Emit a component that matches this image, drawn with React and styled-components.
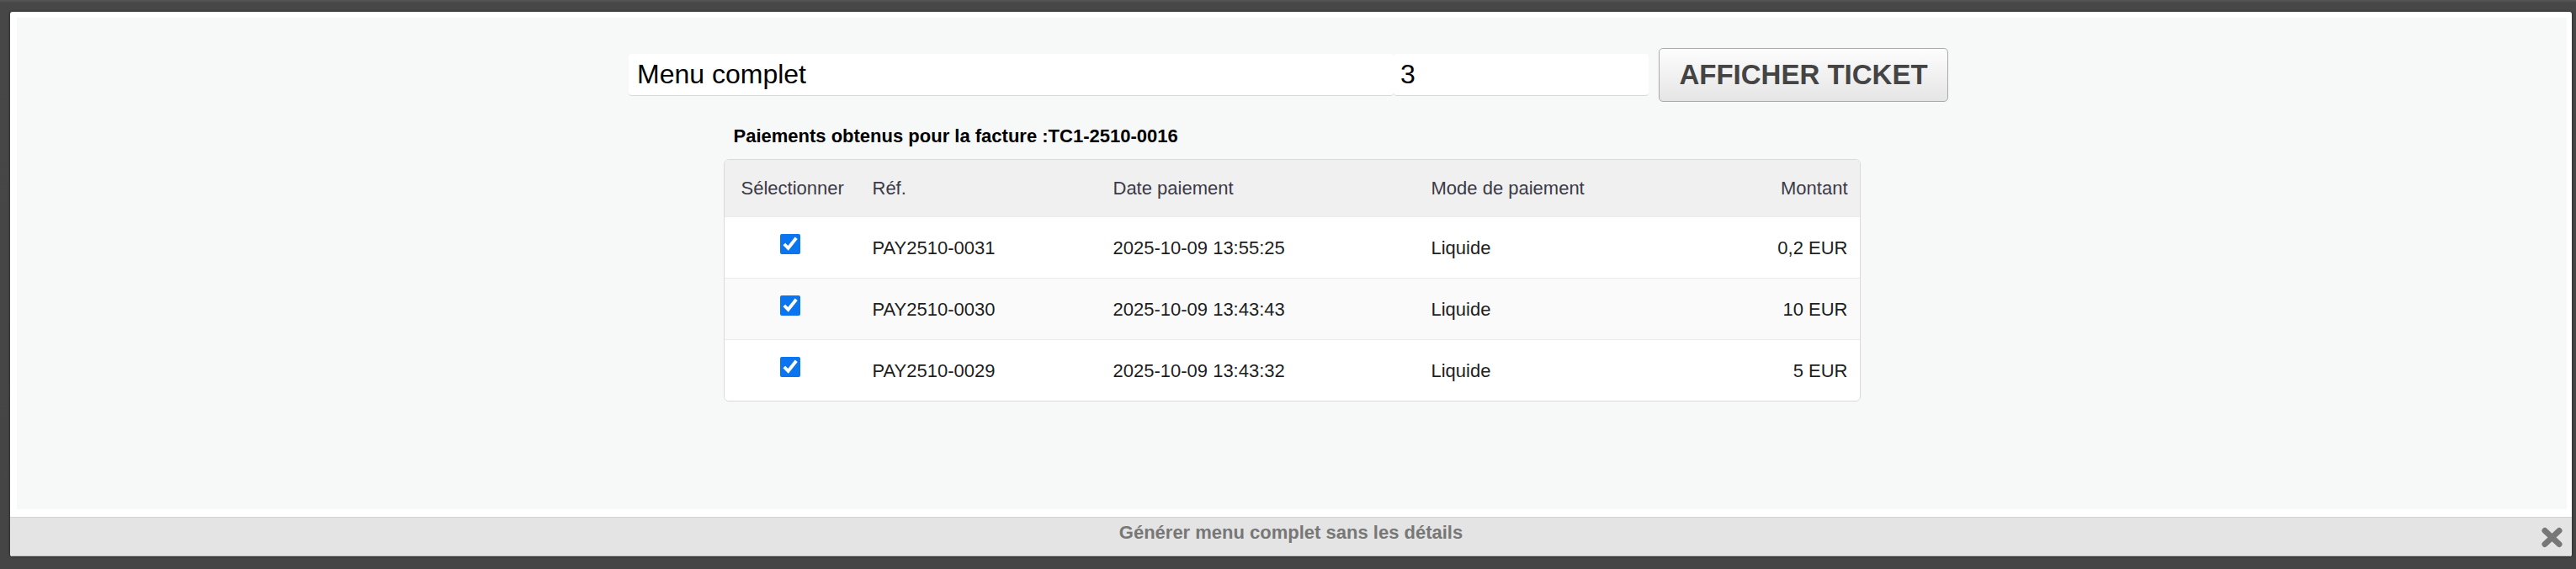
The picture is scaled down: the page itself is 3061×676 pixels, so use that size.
import React from "react";
import styled, { createGlobalStyle } from "styled-components";

const GlobalStyle = createGlobalStyle`
  html, body { margin: 0; padding: 0; }
  body {
    background: #4a4a4a;
    font-family: "Liberation Sans", Arial, sans-serif;
    overflow: hidden;
  }
`;

const Page = styled.div`
  box-sizing: border-box;
  width: 3061px;
  height: 676px;
  padding: 14px 5px 15px 12px;
  background: linear-gradient(#585858 0, #474747 3px, #454545 100%);
  display: flex;
`;

const Dialog = styled.div`
  flex: 1;
  display: flex;
  flex-direction: column;
  background: #ffffff;
  border-radius: 3px;
  box-shadow: 0 0 3px rgba(0, 0, 0, 0.6);
  overflow: hidden;
`;

const Frame = styled.div`
  flex: 1;
  display: flex;
  padding: 7px 6px 9px 8px;
`;

const Content = styled.div`
  flex: 1;
  background: #f6f9f8;
  display: flex;
  flex-direction: column;
  align-items: center;
  padding-top: 36px;
`;

const FormRow = styled.div`
  display: flex;
  align-items: center;
  width: 1569px;
  margin-left: -7px;
`;

const Field = styled.input`
  box-sizing: border-box;
  height: 50px;
  width: ${(p) => p.$w}px;
  border: none;
  border-bottom: 1px solid #d9d9d9;
  border-radius: 4px;
  background: #ffffff;
  padding: 0 0 0 ${(p) => p.$pl}px;
  font-family: "Liberation Sans", Arial, sans-serif;
  font-size: 32px;
  color: #000;
  outline: none;
`;

const TicketButton = styled.button`
  box-sizing: border-box;
  width: 344px;
  height: 64px;
  margin-left: 12px;
  padding: 0;
  border: 1px solid #a9a9a9;
  border-radius: 5px;
  background: linear-gradient(#fdfdfd, #e5e5e5);
  color: #444;
  font-family: "Liberation Sans", Arial, sans-serif;
  font-weight: bold;
  font-size: 33px;
  cursor: pointer;
`;

const Section = styled.div`
  width: 1351px;
  margin-top: 28px;
`;

const Heading = styled.div`
  padding-left: 12px;
  font-family: "Liberation Sans", Arial, sans-serif;
  font-weight: bold;
  font-size: 22px;
  line-height: 25px;
  color: #000;
  margin-bottom: 15px;
`;

const Table = styled.table`
  width: 100%;
  table-layout: fixed;
  border-collapse: separate;
  border-spacing: 0;
  border: 1px solid #dadada;
  border-radius: 6px;
  overflow: hidden;
  font-family: "Liberation Sans", Arial, sans-serif;
  font-size: 22px;
  line-height: 25px;
`;

const HeadCell = styled.th`
  height: 67px;
  padding: 0 ${(p) => (p.$right ? "14px" : "0")} 0 ${(p) => (p.$right ? "0" : "20px")};
  background: #f0f0f0;
  color: #3b3b47;
  font-weight: normal;
  text-align: ${(p) => (p.$right ? "right" : "left")};
  vertical-align: middle;
`;

const Row = styled.tr`
  background: ${(p) => (p.$alt ? "#fafafa" : "#ffffff")};
`;

const Cell = styled.td`
  height: 72px;
  padding: 0 ${(p) => (p.$right ? "14px" : "0")} 0 ${(p) => (p.$right ? "0" : "20px")};
  border-top: 1px solid #ebebeb;
  color: #1e1e1e;
  text-align: ${(p) => (p.$right ? "right" : "left")};
  vertical-align: middle;
`;

const CheckCell = styled(Cell)`
  padding: 0;
  text-align: center;
`;

const Check = styled.input`
  display: block;
  width: 24px;
  height: 24px;
  margin: 0 auto 8px;
  accent-color: #0b75f0;
`;

const ButtonPane = styled.div`
  display: grid;
  grid-template-columns: 1fr auto 1fr;
  align-items: start;
  height: 47px;
  box-sizing: border-box;
  border-top: 1px solid #d3d3d3;
  border-bottom: 1px solid #bdbdbd;
  background: #e4e4e4;
`;

const PaneLabel = styled.div`
  grid-column: 2;
  padding-top: 5px;
  font-family: "Liberation Sans", Arial, sans-serif;
  font-weight: bold;
  font-size: 22px;
  line-height: 25px;
  color: #777;
`;

const CloseIcon = styled.svg`
  grid-column: 3;
  justify-self: end;
  margin: 11px 10px 0 0;
  width: 27px;
  height: 25px;
`;

const payments = [
  { ref: "PAY2510-0031", date: "2025-10-09 13:55:25", mode: "Liquide", amount: "0,2 EUR" },
  { ref: "PAY2510-0030", date: "2025-10-09 13:43:43", mode: "Liquide", amount: "10 EUR" },
  { ref: "PAY2510-0029", date: "2025-10-09 13:43:32", mode: "Liquide", amount: "5 EUR" },
];

export default function App() {
  return (
    <>
      <GlobalStyle />
      <Page>
        <Dialog>
          <Frame>
            <Content>
              <FormRow>
                <Field $w={909} $pl={10} defaultValue="Menu complet" />
                <Field $w={303} $pl={8} defaultValue="3" />
                <TicketButton>AFFICHER TICKET</TicketButton>
              </FormRow>
              <Section>
                <Heading>Paiements obtenus pour la facture :TC1-2510-0016</Heading>
                <Table>
                  <colgroup>
                    <col style={{ width: 156 }} />
                    <col style={{ width: 286 }} />
                    <col style={{ width: 378 }} />
                    <col style={{ width: 331 }} />
                    <col />
                  </colgroup>
                  <thead>
                    <tr>
                      <HeadCell>Sélectionner</HeadCell>
                      <HeadCell>Réf.</HeadCell>
                      <HeadCell>Date paiement</HeadCell>
                      <HeadCell>Mode de paiement</HeadCell>
                      <HeadCell $right>Montant</HeadCell>
                    </tr>
                  </thead>
                  <tbody>
                    {payments.map((p, i) => (
                      <Row key={p.ref} $alt={i === 1}>
                        <CheckCell>
                          <Check type="checkbox" defaultChecked />
                        </CheckCell>
                        <Cell>{p.ref}</Cell>
                        <Cell>{p.date}</Cell>
                        <Cell>{p.mode}</Cell>
                        <Cell $right>{p.amount}</Cell>
                      </Row>
                    ))}
                  </tbody>
                </Table>
              </Section>
            </Content>
          </Frame>
          <ButtonPane>
            <PaneLabel>Générer menu complet sans les détails</PaneLabel>
            <CloseIcon viewBox="0 0 27 25">
              <path d="M5 4.5 L22 20.5 M22 4.5 L5 20.5" stroke="#777" strokeWidth="7" strokeLinecap="round" fill="none" />
            </CloseIcon>
          </ButtonPane>
        </Dialog>
      </Page>
    </>
  );
}
